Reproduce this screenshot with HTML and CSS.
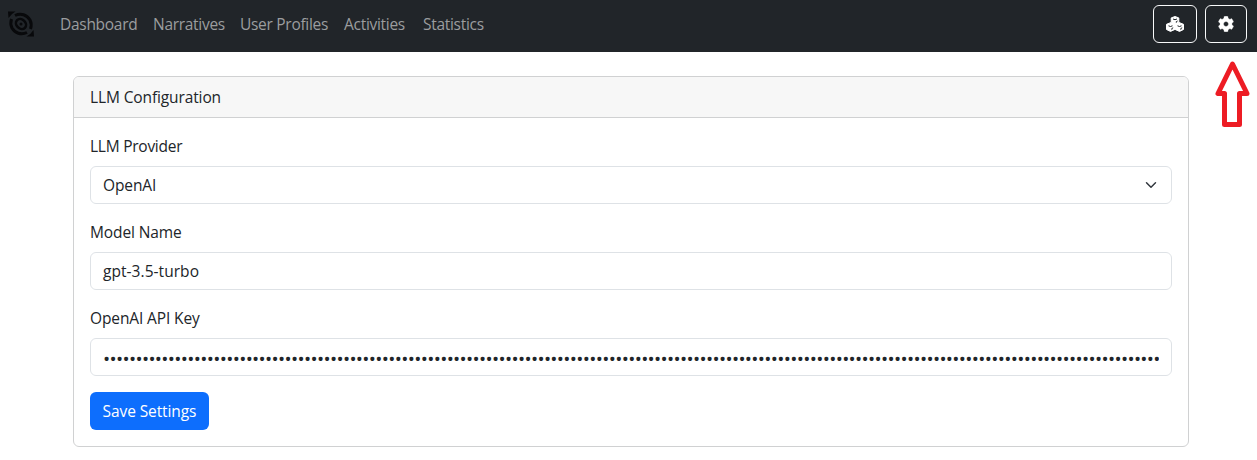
FILE: index.html
```html
<!DOCTYPE html>
<html lang="en">
<head>
<meta charset="utf-8">
<title>LLM Configuration</title>
<link rel="stylesheet" href="styles.css">
</head>
<body>
<nav class="navbar">
  <svg class="logo" viewBox="0 0 30 30" width="30" height="30" fill="none" stroke="#08090b">
    <path d="M2 2.500H9.500Q5 5 2.500 9Z M28 27.500H20.500Q25 25 27.500 21Z" fill="#08090b" stroke="none"/>
    <path d="M9 6.500C15 3.500 21 6 24 11C25.500 14 25.500 17 24.500 20M21 23.500C15 26.500 9 24 6 19C4.500 16 4.500 13 5.500 10" stroke-width="3"/>
    <ellipse cx="15" cy="15" rx="5.500" ry="4.500" transform="rotate(45 15 15)" stroke-width="2.600"/>
    <circle cx="15" cy="15" r="1.500" fill="#08090b" stroke="none"/>
  </svg>
  <div class="links">
    <a class="link dashboard">Dashboard</a>
    <a class="link narratives">Narratives</a>
    <a class="link profiles">User Profiles</a>
    <a class="link activities">Activities</a>
    <a class="link statistics">Statistics</a>
  </div>
  <div class="actions">
    <button class="icon-btn cubes" aria-label="Models">
      <svg viewBox="0 0 20 16" width="20" height="16">
        <path d="M10 .5L13.800 1.900V6.400L18.500 8.300V13.500L14.500 15.400L10 13.400L5.500 15.400L1.500 13.500V8.300L6.200 6.400V1.900Z" fill="#fff" stroke="#fff" stroke-linejoin="round"/>
        <path d="M8 3L10 3.700L12 3M11.300 6.700V5.600L12.600 5M3.500 9.800L5.500 10.500L7.500 9.800M6.800 13.700V12.500L8.200 11.800M12.500 9.800L14.500 10.500L16.500 9.800M15.800 13.700V12.500L17.200 11.800" fill="none" stroke="#212529"/>
      </svg>
    </button>
    <button class="icon-btn gear" aria-label="Settings">
      <svg viewBox="0 0 512 512" width="16" height="16" fill="#fff" stroke="#fff" stroke-width="12"><path d="M487.4 315.7l-42.6-24.6c4.3-23.2 4.3-47 0-70.2l42.6-24.6c4.9-2.8 7.1-8.6 5.5-14-11.1-35.6-30-67.8-54.7-94.6-3.8-4.1-10-5.1-14.8-2.3L380.8 110c-17.9-15.4-38.5-27.3-60.8-35.1V25.8c0-5.6-3.9-10.5-9.4-11.7-36.7-8.2-74.3-7.8-109.2 0-5.5 1.2-9.4 6.1-9.4 11.7V75c-22.2 7.9-42.8 19.8-60.8 35.1L88.7 85.5c-4.9-2.8-11-1.9-14.8 2.3-24.7 26.7-43.6 58.9-54.7 94.6-1.7 5.4.6 11.2 5.5 14L67.3 221c-4.3 23.2-4.3 47 0 70.2l-42.6 24.6c-4.9 2.8-7.1 8.6-5.5 14 11.1 35.6 30 67.8 54.7 94.6 3.8 4.1 10 5.1 14.8 2.3l42.6-24.6c17.9 15.4 38.5 27.3 60.8 35.1v49.2c0 5.6 3.9 10.5 9.4 11.7 36.7 8.2 74.3 7.8 109.2 0 5.5-1.2 9.4-6.1 9.4-11.7v-49.2c22.2-7.9 42.8-19.8 60.8-35.1l42.6 24.6c4.9 2.8 11 1.9 14.8-2.3 24.7-26.7 43.6-58.9 54.7-94.6 1.5-5.5-.7-11.3-5.6-14.1zM256 336c-44.1 0-80-35.9-80-80s35.9-80 80-80 80 35.9 80 80-35.9 80-80 80z"/></svg>
    </button>
  </div>
</nav>
<svg class="pointer" viewBox="0 0 42 72" width="42" height="72" fill="none" stroke="#ed1c24" stroke-width="5" stroke-linejoin="round"><path d="M22.500 7L8 36.500H14.500V67.500H29.500V36.500H37Z"/></svg>
<main class="card">
  <header class="card-header"><span>LLM Configuration</span></header>
  <form class="card-body">
    <div class="field">
      <label class="tight">LLM Provider</label>
      <div class="control select"><span>OpenAI</span>
        <svg viewBox="0 0 16 16" width="16" height="12" fill="none" stroke="#343a40" stroke-width="2" stroke-linecap="round" stroke-linejoin="round"><path d="m2 5 6 6 6-6"/></svg>
      </div>
    </div>
    <div class="field">
      <label>Model Name</label>
      <div class="control"><span class="model">gpt-3.5-turbo</span></div>
    </div>
    <div class="field">
      <label>OpenAI API Key</label>
      <div class="control"><span class="secret">•••••••••••••••••••••••••••••••••••••••••••••••••••••••••••••••••••••••••••••••••••••••••••••••••••••••••••••••••••••••••••••••••••••••••••••••••••••••••••••••••••</span></div>
    </div>
    <button class="save" type="button"><span>Save Settings</span></button>
  </form>
</main>
</body>
</html>
```
FILE: styles.css
```css
* { box-sizing: border-box; }
body {
  margin: 0;
  height: 460px;
  overflow: hidden;
  background: #fff;
  color: #212529;
  font: 15.5px/24px "Open Sans", "Noto Sans", sans-serif;
  letter-spacing: -0.12px;
}
.navbar {
  display: flex;
  align-items: center;
  height: 52px;
  padding: 0 10px 4px 6px;
  background: #212529;
}
.logo { flex: none; }
.links {
  display: flex;
  gap: 16px;
  margin-left: 24px;
  color: #9b9d9f;
  letter-spacing: -0.29px;
}
.link { white-space: nowrap; }
.dashboard { width: 77px; }
.narratives { width: 71px; }
.profiles { width: 88px; }
.activities { width: 63px; }
.actions { display: flex; gap: 8px; margin-left: auto; }
.icon-btn {
  display: flex;
  align-items: center;
  justify-content: center;
  height: 38px;
  padding: 0;
  border: 1px solid #f8f9fa;
  border-radius: 6px;
  background: none;
}
.cubes { width: 44px; }
.gear { width: 42px; }
.pointer { position: absolute; left: 1210px; top: 57px; }
.card {
  width: 1116px;
  margin: 24px 0 0 73px;
  border: 1px solid #d0d1d2;
  border-radius: 6px;
  overflow: hidden;
}
.card-header {
  padding: 8px 16px;
  border-bottom: 1px solid #d0d1d2;
  background: #f7f7f7;
}
.card-body { padding: 16px; }
.field { margin-bottom: 16px; }
.field label { display: block; margin-bottom: 8px; }
.field .tight { letter-spacing: -0.25px; }
.control {
  display: flex;
  align-items: center;
  height: 38px;
  padding: 0 12px;
  border: 1px solid #dee2e6;
  border-radius: 6px;
}
.select { justify-content: space-between; }
.model { letter-spacing: 0.05px; }
.secret {
  overflow: hidden;
  padding-top: 4px;
  white-space: nowrap;
  font-size: 19px;
  letter-spacing: -0.66px;
}
.save {
  display: block;
  width: 119px;
  height: 38px;
  padding: 0;
  border: 0;
  border-radius: 6px;
  background: #0d6efd;
  color: #fff;
  font: inherit;
  letter-spacing: -0.1px;
}
```
